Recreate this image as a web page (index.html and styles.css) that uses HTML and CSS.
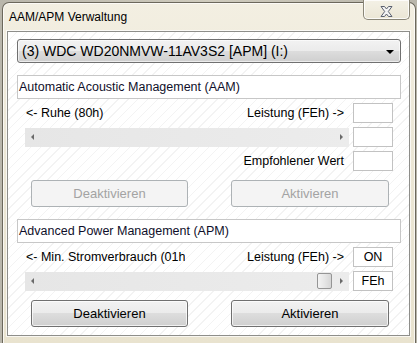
FILE: index.html
```html
<!DOCTYPE html>
<html>
<head>
<meta charset="utf-8">
<link rel="stylesheet" href="styles.css">
</head>
<body>
<div class="window">
  <div class="titlebar">
    <span class="title">AAM/APM Verwaltung</span>
    <div class="close">
      <svg width="13" height="11" viewBox="0 0 13 11"><path d="M1 0.5 H4.5 L6.5 3 L8.5 0.5 H12 L8.3 5.5 L12 10.5 H8.5 L6.5 8 L4.5 10.5 H1 L4.7 5.5 Z" fill="#f4f4f4" stroke="#5b6170" stroke-width="1" stroke-linejoin="round"/></svg>
    </div>
  </div>
  <div class="client">
    <div class="combo">
      <span>(3) WDC WD20NMVW-11AV3S2 [APM] (I:)</span>
      <span class="combo-arrow"></span>
    </div>

    <div class="header">Automatic Acoustic Management (AAM)</div>
    <div class="row r1">
      <span class="lbl">&lt;- Ruhe (80h)</span>
      <span class="spacer"></span>
      <span class="lbl right">Leistung (FEh) -&gt;</span>
      <span class="box"></span>
    </div>
    <div class="row r2">
      <div class="scroll">
        <span class="arr left"></span>
        <span class="track"></span>
        <span class="arr rightarr"></span>
      </div>
      <span class="box"></span>
    </div>
    <div class="row r3">
      <span class="spacer"></span>
      <span class="lbl right">Empfohlener Wert</span>
      <span class="box"></span>
    </div>
    <div class="buttons">
      <div class="btn disabled">Deaktivieren</div>
      <div class="btn disabled wide">Aktivieren</div>
    </div>

    <div class="header h2">Advanced Power Management (APM)</div>
    <div class="row r1">
      <span class="lbl clip">&lt;- Min. Stromverbrauch (01h)</span>
      <span class="spacer"></span>
      <span class="lbl right">Leistung (FEh) -&gt;</span>
      <span class="box">ON</span>
    </div>
    <div class="row r2">
      <div class="scroll">
        <span class="arr left"></span>
        <span class="track"><span class="thumb"></span></span>
        <span class="arr rightarr"></span>
      </div>
      <span class="box">FEh</span>
    </div>
    <div class="buttons">
      <div class="btn">Deaktivieren</div>
      <div class="btn wide">Aktivieren</div>
    </div>
  </div>
</div>
</body>
</html>
```
FILE: styles.css
```css
html, body {
  margin: 0;
  padding: 0;
}
body {
  width: 417px;
  height: 343px;
  overflow: hidden;
  background: linear-gradient(90deg, #b9b6ab 0%, #cfcbbd 50%, #b9b6ab 100%);
  font-family: "Liberation Sans", Arial, sans-serif;
  font-size: 12.5px;
  color: #000;
}
.window {
  box-sizing: border-box;
  margin: 2px 0 0 2px;
  width: 414px;
  height: 343px;
  border: 1px solid #6c685c;
  border-bottom: none;
  border-radius: 7px 7px 0 0;
  background: linear-gradient(180deg, #f3efe2 0%, #ece7d6 40%, #e9e3cf 100%);
  box-shadow: inset 0 0 0 1px rgba(255,255,255,0.7);
  padding: 0 5px 0 4px;
  position: relative;
}
.titlebar {
  height: 28px;
  box-sizing: border-box;
  padding: 6px 0 0 2px;
}
.title {
  font-size: 12px;
  line-height: 16px;
  color: #000;
}
.close {
  position: absolute;
  top: -3px;
  right: 5px;
  width: 47px;
  height: 20px;
  box-sizing: border-box;
  border: 1px solid #8a8677;
  border-top: none;
  border-radius: 0 0 5px 5px;
  background: linear-gradient(180deg, #f4f1e6 0%, #ebe6d5 100%);
  box-shadow: inset 0 0 0 1px rgba(255,255,255,0.8);
  display: flex;
  align-items: center;
  justify-content: center;
  padding-top: 3px;
}
.close svg { display: block; }
.client {
  box-sizing: border-box;
  height: 305px;
  border: 1px solid #8e8e8a;
  box-shadow: 0 0 0 1px rgba(255,255,255,0.7);
  background-color: #ffffff;
  background-image: repeating-linear-gradient(135deg, #ffffff 0px, #ffffff 6px, #f3f3f3 6px, #f3f3f3 7px);
  padding: 7px 8px 8px 9px;
}
.combo {
  box-sizing: border-box;
  height: 24px;
  border: 1px solid #707070;
  border-radius: 3px;
  background: linear-gradient(180deg, #f2f2f2 0%, #ebebeb 49%, #dddddd 50%, #cfcfcf 100%);
  box-shadow: inset 0 0 0 1px rgba(255,255,255,0.6);
  display: flex;
  align-items: center;
  padding: 0 4px 0 4px;
  font-size: 14px;
  margin-bottom: 12px;
}
.combo span:first-child { flex: 1; }
.combo-arrow {
  width: 0;
  height: 0;
  border-left: 4px solid transparent;
  border-right: 4px solid transparent;
  border-top: 4px solid #000;
  margin-right: 2px;
  margin-top: 1px;
}
.header {
  box-sizing: border-box;
  height: 24px;
  border: 1px solid #c7c7c7;
  background: #fff;
  padding-left: 1px;
  display: flex;
  align-items: center;
  color: #0f0f2a;
}
.header.h2 { margin-top: 12px; }
.row {
  height: 20px;
  margin-top: 4px;
  padding: 0 8px;
  display: flex;
  align-items: center;
}
.lbl { white-space: nowrap; }
.r1 .lbl:first-child { padding-left: 1px; }
.lbl.clip {
  width: 159px;
  overflow: hidden;
}
.lbl.right { margin-right: 9px; }
.spacer { flex: 1; }
.box {
  box-sizing: border-box;
  width: 40px;
  height: 20px;
  border: 1px solid #c2c2c2;
  background: #fff;
  margin-left: auto;
  display: flex;
  align-items: center;
  justify-content: center;
  line-height: 1;
}
.scroll {
  box-sizing: border-box;
  width: 324px;
  height: 19px;
  margin-top: 1px;
  background: linear-gradient(90deg, #e6e6e6, #ececec);
  display: flex;
  align-items: stretch;
}
.track {
  flex: 1;
  position: relative;
}
.thumb {
  position: absolute;
  right: 0;
  top: 1px;
  width: 15px;
  height: 16px;
  box-sizing: border-box;
  border: 1px solid #959595;
  border-radius: 2px;
  background: linear-gradient(90deg, #f3f3f3 0%, #e6e6e6 50%, #d6d6d6 100%);
}
.arr {
  width: 17px;
  position: relative;
}
.arr::after {
  content: "";
  position: absolute;
  top: 6px;
  width: 0;
  height: 0;
  border-top: 3px solid transparent;
  border-bottom: 3px solid transparent;
}
.arr.left::after {
  left: 6px;
  border-right: 3px solid #6a6a6a;
}
.arr.rightarr::after {
  left: 8px;
  border-left: 3px solid #6a6a6a;
}
.buttons {
  margin-top: 9px;
  padding: 0 12px 0 14px;
  display: flex;
  justify-content: space-between;
}
.btn {
  box-sizing: border-box;
  width: 157px;
  height: 27px;
  border: 1px solid #707070;
  border-radius: 3px;
  background: linear-gradient(180deg, #f2f2f2 0%, #ebebeb 49%, #dddddd 50%, #cfcfcf 100%);
  box-shadow: inset 0 0 0 1px rgba(255,255,255,0.7);
  display: flex;
  align-items: center;
  justify-content: center;
  font-size: 13px;
  color: #000;
}
.btn.wide { width: 158px; }
.btn.disabled {
  border-color: #adb2b5;
  background: #f4f4f4;
  box-shadow: none;
  color: #a3a3a3;
}
```
